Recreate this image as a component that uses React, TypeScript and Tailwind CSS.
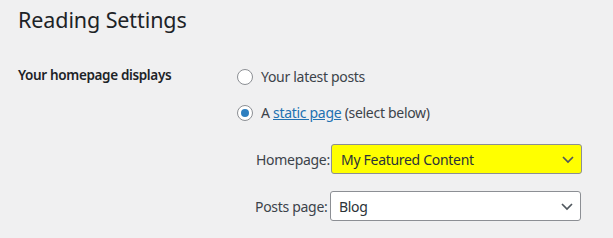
import React from 'react';

function Radio({ checked }: { checked?: boolean }) {
  return (
    <span className="flex h-4 w-4 shrink-0 items-center justify-center rounded-full border border-[#8c8f94] bg-white">
      {checked && <span className="h-2 w-2 rounded-full bg-[#2d7fc0]" />}
    </span>
  );
}

function Chevron() {
  return (
    <svg width="16" height="16" viewBox="0 0 16 16" className="shrink-0">
      <path d="M3 6 L8 11 L13 6" fill="none" stroke="#50575e" strokeWidth="1.7" />
    </svg>
  );
}

function Select({ value, highlight, className }: { value: string; highlight?: boolean; className: string }) {
  return (
    <div className={`flex h-[30px] items-center rounded-[3px] border border-[#8c8f94] ${highlight ? 'bg-[#ffff00]' : 'bg-white'} ${className}`}>
      <span className="flex-1 text-[14px] tracking-[-0.3px] text-[#2c3338]">{value}</span>
      <span className="pr-[5px]">
        <Chevron />
      </span>
    </div>
  );
}

export default function App() {
  return (
    <div
      className="h-[238px] w-[613px] overflow-hidden bg-[#f0f0f1] text-[#1d2327]"
      style={{ fontFamily: '"Noto Sans", "Open Sans", sans-serif' }}
    >
      <h1 className="pl-[18px] pt-[5px] text-[21.5px] leading-[30px] font-normal tracking-[-0.1px]">Reading Settings</h1>
      <div className="mt-[30px] flex">
        <div className="w-[237px] shrink-0 pl-[18px] text-[13.5px] font-semibold leading-[20px] tracking-[-0.35px]">
          Your homepage displays
        </div>
        <div className="flex-1">
          <label className="mt-[2px] flex items-center gap-[8px] text-[14px] leading-[20px] tracking-[-0.3px] text-[#3c434a]">
            <Radio />
            <span>Your latest posts</span>
          </label>
          <label className="mt-[16px] flex items-center gap-[8px] text-[14px] leading-[20px] tracking-[-0.3px] text-[#3c434a]">
            <Radio checked />
            <span>
              A <a className="text-[#2271b1] underline">static page</a> (select below)
            </span>
          </label>
          <div className="mt-[21px] flex items-center">
            <span className="w-[94px] shrink-0 whitespace-nowrap pl-[19px] text-[14px] tracking-[-0.3px] text-[#3c434a]">
              Homepage:
            </span>
            <Select value="My Featured Content" highlight className="w-[251px] pl-[9px]" />
          </div>
          <div className="mt-[17px] flex items-center">
            <span className="w-[93px] shrink-0 whitespace-nowrap pl-[18px] text-[14px] tracking-[-0.3px] text-[#3c434a]">
              Posts page:
            </span>
            <Select value="Blog" className="w-[251px] pl-[8px]" />
          </div>
        </div>
      </div>
    </div>
  );
}
